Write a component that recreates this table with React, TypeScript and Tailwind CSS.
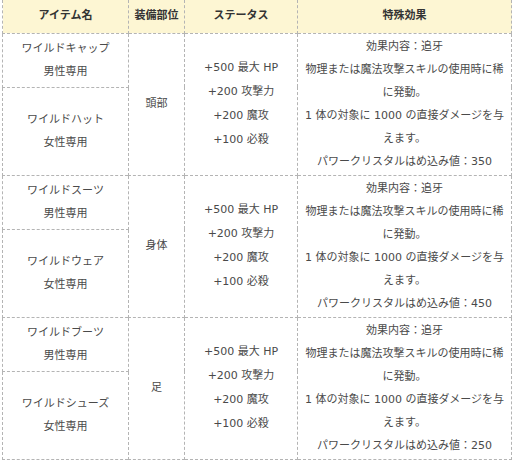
const groups = [
  {
    part: "頭部",
    items: [
      { name: "ワイルドキャップ", sex: "男性専用" },
      { name: "ワイルドハット", sex: "女性専用" },
    ],
    crystal: "350",
  },
  {
    part: "身体",
    items: [
      { name: "ワイルドスーツ", sex: "男性専用" },
      { name: "ワイルドウェア", sex: "女性専用" },
    ],
    crystal: "450",
  },
  {
    part: "足",
    items: [
      { name: "ワイルドブーツ", sex: "男性専用" },
      { name: "ワイルドシューズ", sex: "女性専用" },
    ],
    crystal: "250",
  },
];

const cell = "border border-dashed border-[#b4b4b4] text-center align-middle px-1";

export default function App() {
  return (
    <div
      className="w-[512px] h-[463px] bg-white pl-[2px] text-[11px] text-[#4a4a4a]"
      style={{ fontFamily: '"DejaVu Sans", "Noto Sans CJK JP", sans-serif' }}
    >
      <table className="table-fixed border-collapse w-[509px]">
        <colgroup>
          <col className="w-[126px]" />
          <col className="w-[56px]" />
          <col className="w-[113px]" />
          <col className="w-[214px]" />
        </colgroup>
        <thead>
          <tr className="h-[33px] bg-[#fdf6d3]">
            {["アイテム名", "装備部位", "ステータス", "特殊効果"].map((h) => (
              <th key={h} className={`${cell} border-t-0 font-bold text-[#333]`}>
                {h}
              </th>
            ))}
          </tr>
        </thead>
        <tbody>
          {groups.map((g) => (
            <>
              <tr key={g.part + "a"} className="h-[54px]">
                <td className={`${cell} leading-[23px]`}>
                  {g.items[0].name}
                  <br />
                  {g.items[0].sex}
                </td>
                <td rowSpan={2} className={cell}>
                  {g.part}
                </td>
                <td rowSpan={2} className={`${cell} leading-[24px] whitespace-nowrap`}>
                  +500 最大 HP
                  <br />
                  +200 攻撃力
                  <br />
                  +200 魔攻
                  <br />
                  +100 必殺
                </td>
                <td rowSpan={2} className={`${cell} leading-[23px] whitespace-nowrap`}>
                  効果内容：追牙
                  <br />
                  物理または魔法攻撃スキルの使用時に稀
                  <br />
                  に発動。
                  <br />
                  1 体の対象に 1000 の直接ダメージを与
                  <br />
                  えます。
                  <br />
                  パワークリスタルはめ込み値：{g.crystal}
                </td>
              </tr>
              <tr key={g.part + "b"} className="h-[88px]">
                <td className={`${cell} leading-[23px]`}>
                  {g.items[1].name}
                  <br />
                  {g.items[1].sex}
                </td>
              </tr>
            </>
          ))}
        </tbody>
      </table>
    </div>
  );
}
